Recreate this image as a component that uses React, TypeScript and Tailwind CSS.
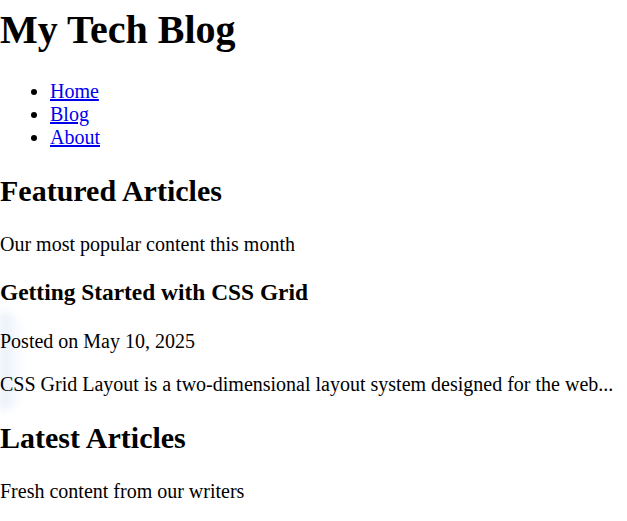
const links = ["Home", "Blog", "About"]

export default function App() {
    return <div className="min-h-screen bg-white text-black font-['Liberation_Serif','Times_New_Roman',serif] text-[20px] leading-[normal] pt-[6px]">
        <header>
            <h1 className="text-[40px] font-bold mb-[27px]">My Tech Blog</h1>
            <nav>
                <ul className="list-disc pl-[50px] my-5">
                    {links.map(l => <li key={l}><a href="#" className="text-[#0000ee] underline">{l}</a></li>)}
                </ul>
            </nav>
        </header>

        <section>
            <h2 className="text-[30px] font-bold my-[25px]">Featured Articles</h2>
            <p className="my-5">Our most popular content this month</p>
            <article className="relative">
                {/* soft glow of the card edge */}
                <div className="absolute left-0 top-[32px] h-[100px] w-[24px] rounded-r-full bg-linear-to-r from-[#e6edf8] to-transparent blur-[4px] pointer-events-none" />
                <h3 className="relative text-[23.4px] font-bold my-[23.4px]">Getting Started with CSS Grid</h3>
                <p className="relative my-5">Posted on May 10, 2025</p>
                <p className="relative my-5">CSS Grid Layout is a two-dimensional layout system designed for the web...</p>
            </article>
        </section>

        <section>
            <h2 className="text-[30px] font-bold my-[25px]">Latest Articles</h2>
            <p className="my-5">Fresh content from our writers</p>
        </section>
    </div>
}
